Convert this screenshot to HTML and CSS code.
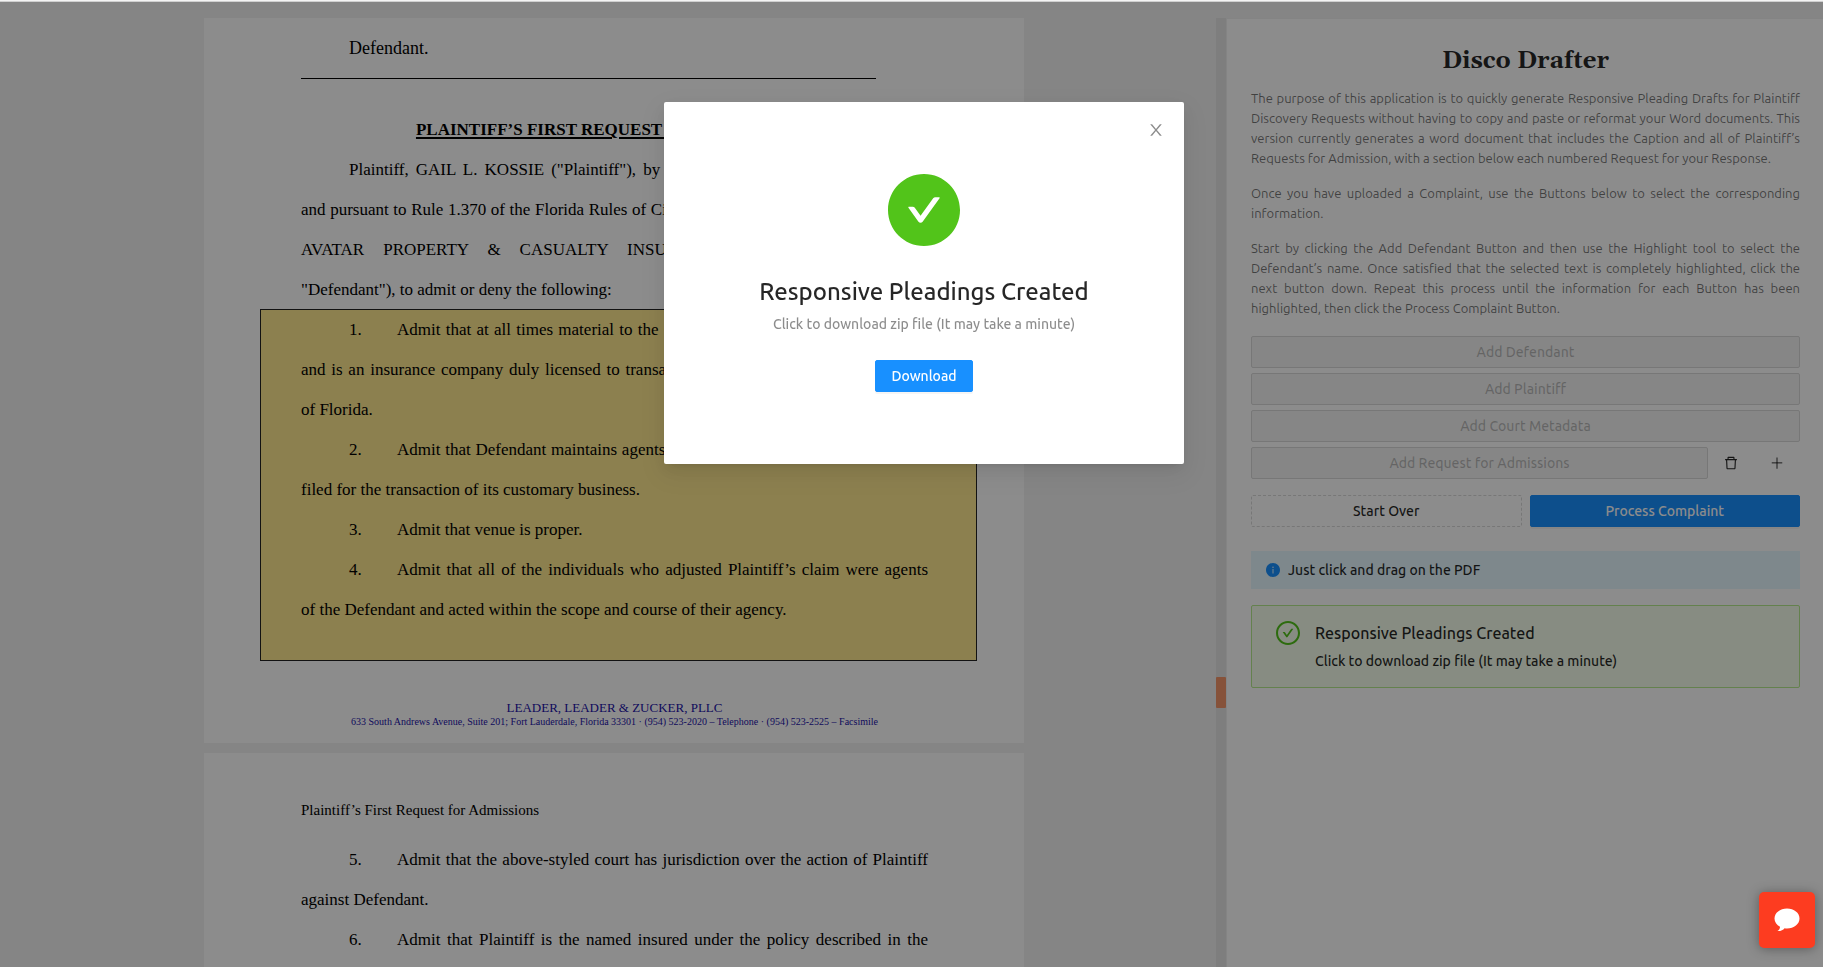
FILE: index.html
```html
<!DOCTYPE html>
<html lang="en">
<head>
<meta charset="utf-8">
<title>Disco Drafter</title>
<link rel="stylesheet" href="styles.css">
</head>
<body>
<div class="topline"></div>
<div class="app">
  <main class="viewer">
    <article class="page page-one">
      <p class="caption">Defendant.</p>
      <hr class="rule">
      <h2 class="doc-title">PLAINTIFF’S FIRST REQUEST FOR ADMISSIONS</h2>
      <p class="line full indent">Plaintiff, GAIL L. KOSSIE ("Plaintiff"), by and through his undersigned counsel</p>
      <p class="line full">and pursuant to Rule 1.370 of the Florida Rules of Civil Procedure, requests the Defendant,</p>
      <p class="line full">AVATAR PROPERTY &amp; CASUALTY INSURANCE COMPANY (hereinafter,</p>
      <p class="line">"Defendant"), to admit or deny the following:</p>
      <section class="highlight">
        <p class="line item"><span class="num">1.</span><span class="line full grow">Admit that at all times material to the Complaint, Defendant was a company</span></p>
        <p class="line full">and is an insurance company duly licensed to transact insurance business within the State</p>
        <p class="line">of Florida.</p>
        <p class="line item"><span class="num">2.</span><span class="line full grow">Admit that Defendant maintains agents in the county and venue in which suit</span></p>
        <p class="line">filed for the transaction of its customary business.</p>
        <p class="line item"><span class="num">3.</span><span class="line grow">Admit that venue is proper.</span></p>
        <p class="line item"><span class="num">4.</span><span class="line full grow">Admit that all of the individuals who adjusted Plaintiff’s claim were agents</span></p>
        <p class="line">of the Defendant and acted within the scope and course of their agency.</p>
      </section>
      <footer class="letterhead">
        <p class="firm">LEADER, LEADER &amp; ZUCKER, PLLC</p>
        <p class="address">633 South Andrews Avenue, Suite 201; Fort Lauderdale, Florida 33301 · (954) 523-2020 – Telephone · (954) 523-2525 – Facsimile</p>
      </footer>
    </article>
    <article class="page page-two">
      <p class="running-head">Plaintiff’s First Request for Admissions</p>
      <p class="line item"><span class="num">5.</span><span class="line full grow">Admit that the above-styled court has jurisdiction over the action of Plaintiff</span></p>
      <p class="line">against Defendant.</p>
      <p class="line item"><span class="num">6.</span><span class="line full grow">Admit that Plaintiff is the named insured under the policy described in the</span></p>
    </article>
  </main>
  <div class="track"><div class="marker"></div></div>
  <aside class="sidebar">
    <h1 class="brand">Disco Drafter</h1>
    <div class="intro">
      <p><span>The purpose of this application is to quickly generate Responsive Pleading Drafts for Plaintiff</span> <span>Discovery Requests without having to copy and paste or reformat your Word documents. This</span> <span>version currently generates a word document that includes the Caption and all of Plaintiff’s</span> <span>Requests for Admission, with a section below each numbered Request for your Response.</span></p>
      <p><span>Once you have uploaded a Complaint, use the Buttons below to select the corresponding</span> <span>information.</span></p>
      <p><span>Start by clicking the Add Defendant Button and then use the Highlight tool to select the</span> <span>Defendant’s name. Once satisfied that the selected text is completely highlighted, click the</span> <span>next button down. Repeat this process until the information for each Button has been</span> <span>highlighted, then click the Process Complaint Button.</span></p>
    </div>
    <div class="steps">
      <button class="btn" disabled>Add Defendant</button>
      <button class="btn" disabled>Add Plaintiff</button>
      <button class="btn" disabled>Add Court Metadata</button>
      <div class="step-row">
        <button class="btn" disabled>Add Request for Admissions</button>
        <button class="icon-btn" aria-label="Delete"><svg viewBox="64 64 896 896" width="14" height="14" fill="currentColor"><path d="M360 184h-8c4.400 0 8-3.600 8-8v8h304v-8c0 4.400 3.600 8 8 8h-8v72h72v-80c0-35.300-28.700-64-64-64H352c-35.300 0-64 28.700-64 64v80h72v-72zm504 72H160c-17.700 0-32 14.300-32 32v32c0 4.400 3.600 8 8 8h60.400l24.700 523c1.600 34.100 29.800 61 63.900 61h454c34.200 0 62.300-26.800 63.900-61l24.700-523H888c4.400 0 8-3.600 8-8v-32c0-17.700-14.300-32-32-32zM731.300 840H292.700l-24.200-512h487l-24.200 512z"/></svg></button>
        <button class="icon-btn" aria-label="Add"><svg viewBox="64 64 896 896" width="14" height="14" fill="currentColor"><path d="M482 152h60v720h-60z"/><path d="M176 474h672v60H176z"/></svg></button>
      </div>
    </div>
    <div class="actions">
      <button class="btn dashed">Start Over</button>
      <button class="btn primary">Process Complaint</button>
    </div>
    <div class="alert info">
      <svg viewBox="64 64 896 896" width="14" height="14" fill="#1890ff"><path d="M512 64C264.600 64 64 264.600 64 512s200.600 448 448 448 448-200.600 448-448S759.400 64 512 64zm32 664c0 4.400-3.600 8-8 8h-48c-4.400 0-8-3.600-8-8V456c0-4.400 3.600-8 8-8h48c4.400 0 8 3.600 8 8v272zm-32-344a48 48 0 0 1 0-96 48 48 0 0 1 0 96z"/></svg>
      <span>Just click and drag on the PDF</span>
    </div>
    <div class="alert success">
      <svg viewBox="64 64 896 896" width="24" height="24" fill="#52c41a"><path d="M699 353h-46.900c-10.200 0-19.900 4.900-25.900 13.300L469 584.300l-71.200-98.800c-6-8.300-15.600-13.300-25.900-13.300H325c-6.500 0-10.300 7.400-6.500 12.700l124.600 172.800a31.800 31.800 0 0 0 51.700 0l210.600-292c3.900-5.300.1-12.700-6.400-12.700z"/><path d="M512 64C264.600 64 64 264.600 64 512s200.600 448 448 448 448-200.600 448-448S759.400 64 512 64zm0 820c-205.400 0-372-166.600-372-372s166.600-372 372-372 372 166.600 372 372-166.600 372-372 372z"/></svg>
      <div>
        <p class="alert-title">Responsive Pleadings Created</p>
        <p class="alert-text">Click to download zip file (It may take a minute)</p>
      </div>
    </div>
  </aside>
</div>
<div class="mask">
  <div class="modal" role="dialog" aria-labelledby="done">
    <button class="close" aria-label="Close"><svg viewBox="64 64 896 896" width="16" height="16" fill="currentColor"><path d="M563.800 512l262.500-312.900c4.400-5.200.7-13.100-6.100-13.100h-79.800c-4.700 0-9.200 2.100-12.300 5.700L511.600 449.800 295.100 191.700c-3-3.600-7.500-5.700-12.300-5.700H203c-6.800 0-10.500 7.900-6.100 13.100L459.400 512 196.900 824.900A8 8 0 0 0 203 838h79.800c4.700 0 9.200-2.100 12.300-5.700l216.500-258.100 216.500 258.100c3 3.600 7.500 5.700 12.300 5.700h79.800c6.800 0 10.500-7.900 6.100-13.100L563.800 512z"/></svg></button>
    <svg class="tick" viewBox="64 64 896 896" width="72" height="72" fill="#52c41a"><path d="M512 64C264.600 64 64 264.600 64 512s200.600 448 448 448 448-200.600 448-448S759.400 64 512 64zm193.500 301.700l-210.600 292a31.800 31.800 0 0 1-51.700 0L318.500 484.900c-3.800-5.300 0-12.700 6.500-12.700h46.900c10.200 0 19.900 4.900 25.900 13.300l71.200 98.800 157.200-218c6-8.300 15.600-13.300 25.900-13.300H699c6.500 0 10.300 7.400 6.500 12.700z"/></svg>
    <h2 class="modal-title" id="done">Responsive Pleadings Created</h2>
    <p class="modal-text">Click to download zip file (It may take a minute)</p>
    <button class="btn primary download">Download</button>
  </div>
</div>
<button class="chat" aria-label="Open chat"><svg viewBox="0 0 26 24" width="26" height="24" fill="#fff"><path d="M13 0.500C6 0.500 0.500 4.900 0.500 10.400c0 3.500 2.200 6.500 5.500 8.300 0 1.700-.8 3.300-2.600 4.400 3.300.2 5.700-1 7.200-2.900.8.100 1.600.2 2.400.2 7 0 12.500-4.500 12.500-10S20 .5 13 .5z"/></svg></button>
</body>
</html>
```
FILE: styles.css
```css
* { box-sizing: border-box; }
body {
  margin: 0;
  height: 100vh;
  overflow: hidden;
  display: flex;
  flex-direction: column;
  background: #f3f3f3;
  color: rgba(0, 0, 0, .85);
  font: 500 14px/22px Ubuntu, "Noto Sans", sans-serif;
}
p, h1, h2 { margin: 0; }
svg { display: block; flex: none; }
button { font: inherit; cursor: pointer; }

.topline {
  flex: none;
  height: 2px;
  background: #f4f4f4;
  border-bottom: 1px solid #d0d0d0;
}
.app {
  flex: 1;
  min-height: 0;
  display: flex;
  padding-top: 16px;
}

/* Document viewer */
.viewer {
  flex: 1;
  min-width: 0;
  overflow: hidden;
  display: flex;
  flex-direction: column;
  align-items: center;
  gap: 10px;
  padding-left: 12px;
  color: #000;
  font-family: "Liberation Serif", serif;
  font-size: 17px;
  font-weight: 400;
}
.page {
  flex: none;
  width: 820px;
  padding: 0 96px 0 97px;
  background: #fff;
}
.page-two { padding-bottom: 80px; }
.caption {
  padding: 20px 48px 0;
  font-size: 18px;
  line-height: 20px;
}
.rule {
  width: 575px;
  margin: 20px 0 31px;
  border: 0;
  border-top: 1px solid #000;
}
.doc-title {
  font-size: 17px;
  line-height: 40px;
  text-align: center;
  text-decoration: underline;
  text-decoration-thickness: 2px;
  text-underline-offset: 2px;
}
.line { line-height: 40px; white-space: nowrap; }
.full { white-space: normal; text-align: justify; text-align-last: justify; }
.indent { padding-left: 48px; }
.item { display: flex; padding-left: 48px; }
.num { flex: none; width: 48px; }
.grow { flex: 1; }
.highlight {
  margin: -1px -49px 0 -41px;
  padding: 0 48px 30px 40px;
  border: 1px solid #222;
  background: #ffe990;
}
.letterhead {
  padding: 39px 0 15px;
  color: #1c12a8;
  text-align: center;
}
.firm { font-size: 13px; line-height: 15px; }
.address { margin: 0 -40px; font-size: 10px; line-height: 13px; }
.running-head { padding: 47px 0 20px; font-size: 15px; line-height: 20px; }

.track { flex: none; width: 10px; padding-top: 659px; background: #e6e6e6; }
.marker { height: 31px; border-radius: 1px; background: #f4956a; }

/* Sidebar */
.sidebar {
  flex: none;
  width: 597px;
  padding: 23px 23px 24px 24px;
  border: solid #f0f0f0;
  border-width: 1px 0 0 1px;
  background: #fff;
}
.brand {
  font: bold 24px/38px Gelasio, Georgia, "Liberation Serif", serif;
  text-align: center;
}
.intro {
  padding-top: 8px;
  color: rgba(0, 0, 0, .55);
  font-size: 13px;
  font-weight: 400;
  line-height: 20px;
}
.intro p { margin-bottom: 15px; }
.intro span { display: block; text-align: justify; text-align-last: justify; }
.intro span:last-child { text-align-last: left; }
.steps { display: flex; flex-direction: column; gap: 5px; padding-top: 3px; }
.btn {
  height: 32px;
  padding: 0 15px;
  border: 1px solid #d9d9d9;
  border-radius: 2px;
  background: #fff;
  color: rgba(0, 0, 0, .85);
}
.btn:disabled { background: #f5f5f5; color: rgba(0, 0, 0, .25); cursor: not-allowed; }
.btn.dashed { border-style: dashed; }
.btn.primary {
  border-color: #1890ff;
  background: #1890ff;
  color: #fff;
  box-shadow: 0 2px 0 rgba(0, 0, 0, .04);
}
.step-row { display: flex; }
.step-row .btn { flex: 1; }
.icon-btn {
  width: 46px;
  height: 32px;
  padding: 0;
  border: 0;
  background: none;
  display: grid;
  place-items: center;
  color: rgba(0, 0, 0, .85);
}
.actions { display: flex; gap: 8px; margin-top: 16px; }
.actions .btn { flex: 1; }
.alert { display: flex; }
.info {
  align-items: center;
  gap: 8px;
  margin-top: 24px;
  padding: 8px 15px;
  background: #e6f7ff;
}
.success {
  gap: 15px;
  margin-top: 16px;
  padding: 15px 24px;
  border: 1px solid #b7eb8f;
  border-radius: 2px;
  background: #f6ffed;
}
.alert-title { margin-bottom: 4px; font-size: 16px; line-height: 25px; }

/* Dialog */
.mask {
  position: fixed;
  inset: 2px 0 0;
  display: flex;
  justify-content: center;
  align-items: flex-start;
  padding: 100px 0 0 25px;
  background: rgba(0, 0, 0, .45);
}
.modal {
  position: relative;
  width: 520px;
  padding: 72px 56px;
  display: flex;
  flex-direction: column;
  align-items: center;
  border-radius: 2px;
  background: #fff;
  box-shadow: 0 3px 6px -4px rgba(0, 0, 0, .12), 0 6px 16px rgba(0, 0, 0, .08), 0 9px 28px 8px rgba(0, 0, 0, .05);
}
.close {
  position: absolute;
  top: 0;
  right: 0;
  width: 56px;
  height: 56px;
  padding: 0;
  border: 0;
  background: none;
  display: grid;
  place-items: center;
  color: rgba(0, 0, 0, .45);
}
.modal-title { margin-top: 24px; font-size: 24px; font-weight: 500; line-height: 43px; }
.modal-text { color: rgba(0, 0, 0, .45); line-height: 23px; }
.download { margin-top: 24px; }
.chat {
  position: fixed;
  right: 8px;
  bottom: 19px;
  width: 56px;
  height: 56px;
  padding: 0;
  border: 0;
  border-radius: 5px;
  display: grid;
  place-items: center;
  background: #fd3c20;
  box-shadow: 0 1px 12px rgba(0, 0, 0, .35);
}
```
